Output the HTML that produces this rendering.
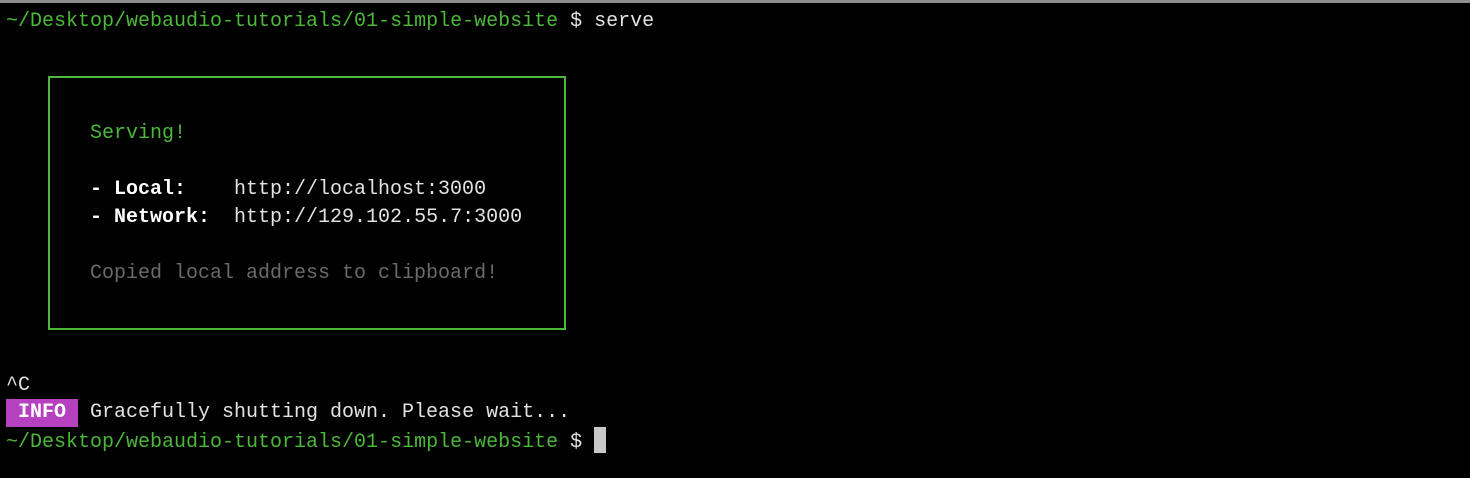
<!DOCTYPE html>
<html><head><style>
html,body{margin:0;padding:0;background:#000;width:1470px;height:478px;overflow:hidden}
body{position:relative;font-family:"Liberation Mono",monospace;font-size:20px;color:#e2e2e2}
.top{position:absolute;left:0;top:0;width:1470px;height:3px;background:#8c8c8c}
.l{position:absolute;left:6px;height:28px;line-height:28px;white-space:pre}
.g{color:#4cb83a}
.d{color:#6a6a6a}
b{color:#fff}
.box{position:absolute;left:48px;top:76px;width:514px;height:250px;border:2px solid #4cb83a}
.info{background:#b540c0;color:#fff;font-weight:bold;display:inline-block;width:72px;text-align:center}
.cur{display:inline-block;width:12px;height:26px;background:#c8c8c8;vertical-align:-6px}
</style></head><body>
<div class="top"></div>
<div class="l" style="top:8px"><span class="g">~/Desktop/webaudio-tutorials/01-simple-website</span> $ serve</div>
<div class="box"></div>
<div class="l g" style="top:120px;left:90px">Serving!</div>
<div class="l" style="top:176px;left:90px"><b>- Local:</b>    http://localhost:3000</div>
<div class="l" style="top:204px;left:90px"><b>- Network:</b>  http://129.102.55.7:3000</div>
<div class="l d" style="top:260px;left:90px">Copied local address to clipboard!</div>
<div class="l" style="top:372px">^C</div>
<div class="l" style="top:399px"><span class="info">INFO</span> Gracefully shutting down. Please wait...</div>
<div class="l" style="top:427px"><span class="g">~/Desktop/webaudio-tutorials/01-simple-website</span> $ <span class="cur"></span></div>
</body></html>
